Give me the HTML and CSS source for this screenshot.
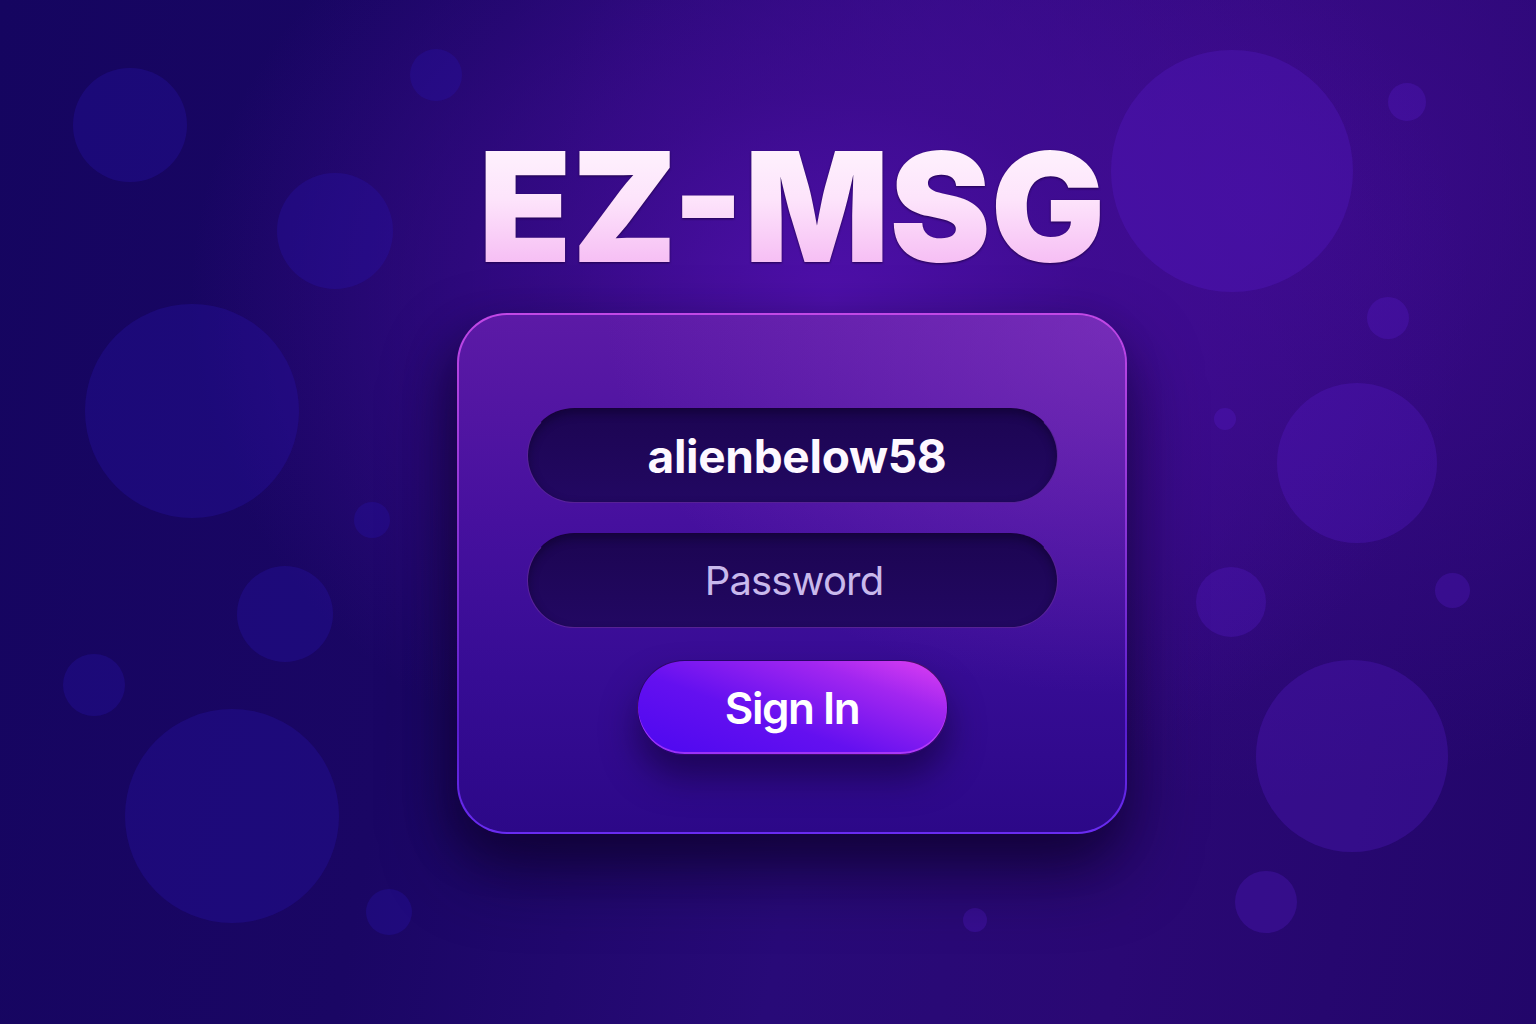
FILE: index.html
```html
<!DOCTYPE html>
<html lang="en">
<head>
<meta charset="utf-8">
<title>EZ-MSG</title>
<link rel="stylesheet" href="styles.css">
</head>
<body>
<div class="bubbles" aria-hidden="true">
  <span class="bubble b-left" style="left:73px;top:68px;width:114px;height:114px"></span>
  <span class="bubble b-left" style="left:410px;top:49px;width:52px;height:52px"></span>
  <span class="bubble b-left" style="left:277px;top:173px;width:116px;height:116px"></span>
  <span class="bubble b-left" style="left:85px;top:304px;width:214px;height:214px"></span>
  <span class="bubble b-left" style="left:354px;top:502px;width:36px;height:36px"></span>
  <span class="bubble b-left" style="left:237px;top:566px;width:96px;height:96px"></span>
  <span class="bubble b-left" style="left:63px;top:654px;width:62px;height:62px"></span>
  <span class="bubble b-left" style="left:125px;top:709px;width:214px;height:214px"></span>
  <span class="bubble b-left" style="left:366px;top:889px;width:46px;height:46px"></span>
  <span class="bubble b-right" style="left:1111px;top:50px;width:242px;height:242px"></span>
  <span class="bubble b-right" style="left:1388px;top:83px;width:38px;height:38px"></span>
  <span class="bubble b-right" style="left:1367px;top:297px;width:42px;height:42px"></span>
  <span class="bubble b-right" style="left:1214px;top:408px;width:22px;height:22px"></span>
  <span class="bubble b-right" style="left:1277px;top:383px;width:160px;height:160px"></span>
  <span class="bubble b-right" style="left:1196px;top:567px;width:70px;height:70px"></span>
  <span class="bubble b-right" style="left:1435px;top:573px;width:35px;height:35px"></span>
  <span class="bubble b-right" style="left:1256px;top:660px;width:192px;height:192px"></span>
  <span class="bubble b-right" style="left:1235px;top:871px;width:62px;height:62px"></span>
  <span class="bubble b-right" style="left:963px;top:908px;width:24px;height:24px"></span>
</div>

<main class="page">
  <h1 class="logo">EZ-MSG</h1>
  <form class="card" onsubmit="return false">
    <div class="field field-user">alienbelow58</div>
    <div class="field field-pass">Password</div>
    <button class="signin" type="submit">Sign In</button>
  </form>
</main>
</body>
</html>
```

FILE: styles.css
```css
html, body {
  margin: 0;
  padding: 0;
}

body {
  width: 1536px;
  height: 1024px;
  overflow: hidden;
  position: relative;
  font-family: Inter, "Noto Sans", "Liberation Sans", sans-serif;
  background:
    radial-gradient(ellipse 640px 520px at 830px 300px, rgba(80, 16, 172, 0.95) 0%, rgba(66, 12, 150, 0.7) 40%, rgba(50, 10, 130, 0) 100%),
    radial-gradient(ellipse 700px 600px at 1250px 200px, rgba(68, 12, 150, 0.7) 0%, rgba(60, 10, 140, 0) 100%),
    linear-gradient(100deg, #150560 0%, #1a0664 30%, #280a78 55%, #2a0874 75%, #22066a 100%);
}

.bubbles {
  position: absolute;
  inset: 0;
  pointer-events: none;
}

.bubble {
  position: absolute;
  border-radius: 50%;
}

.b-left {
  background: rgba(40, 20, 170, 0.32);
}

.b-right {
  background: rgba(90, 30, 210, 0.28);
}

.page {
  position: relative;
  display: flex;
  flex-direction: column;
  align-items: center;
  padding-top: 131px;
  margin-left: 48px;
}

.logo {
  margin: 0;
  font-family: Inter, "Noto Sans", sans-serif;
  font-weight: 900;
  font-size: 152px;
  line-height: 1;
  letter-spacing: 0;
  background: linear-gradient(180deg, #fff6fe 0%, #fde4fb 45%, #f4b2f2 100%);
  -webkit-background-clip: text;
  background-clip: text;
  color: transparent;
  filter: drop-shadow(0 1px 1px rgba(30, 0, 70, 0.9));
}

.card {
  box-sizing: border-box;
  width: 670px;
  height: 521px;
  margin: 0;
  margin-top: 30px;
  padding-top: 93px;
  display: flex;
  flex-direction: column;
  align-items: center;
  border-radius: 50px;
  border: 2px solid transparent;
  background:
    radial-gradient(ellipse 520px 380px at 100% 0%, rgba(140, 60, 200, 0.55) 0%, rgba(120, 40, 190, 0) 100%) padding-box,
    linear-gradient(180deg, #5c1aa6 0%, #46109e 40%, #360c94 70%, #2c0888 100%) padding-box,
    linear-gradient(180deg, #c248e6 0%, #8c34d6 40%, #5a1ed0 80%, #6a2cf2 100%) border-box;
  box-shadow:
    0 36px 70px rgba(12, 2, 40, 0.65),
    -10px 20px 40px rgba(12, 2, 40, 0.35);
}

.field {
  box-sizing: border-box;
  width: 531px;
  height: 95px;
  border-radius: 48px;
  display: flex;
  align-items: center;
  justify-content: center;
  background: linear-gradient(180deg, #1c0552 0%, #220862 100%);
  border: 1.5px solid rgba(160, 70, 230, 0.45);
  border-top-color: rgba(20, 0, 50, 0.8);
  box-shadow: inset 0 4px 10px rgba(8, 0, 30, 0.45);
}

.field + .field {
  margin-top: 30px;
}

.field-user {
  color: #fdf8ff;
  font-weight: 700;
  font-size: 46px;
  letter-spacing: -0.3px;
  padding-left: 10px;
}

.field-pass {
  color: #c9b9ec;
  font-weight: 400;
  font-size: 40px;
  letter-spacing: -0.8px;
  padding-left: 4px;
}

.signin {
  margin-top: 32px;
  width: 311px;
  height: 95px;
  border-radius: 48px;
  border: 1px solid rgba(20, 0, 50, 0.7);
  background: linear-gradient(20deg, #4c08f0 0%, #6410f0 40%, #a226f0 75%, #e040f2 100%);
  color: #ffffff;
  font-family: Inter, "Noto Sans", sans-serif;
  font-weight: 600;
  font-size: 44px;
  letter-spacing: -1.5px;
  box-shadow:
    inset 0 -2px 0 rgba(230, 90, 255, 0.5),
    0 22px 34px rgba(14, 2, 48, 0.55);
  cursor: pointer;
}
```
